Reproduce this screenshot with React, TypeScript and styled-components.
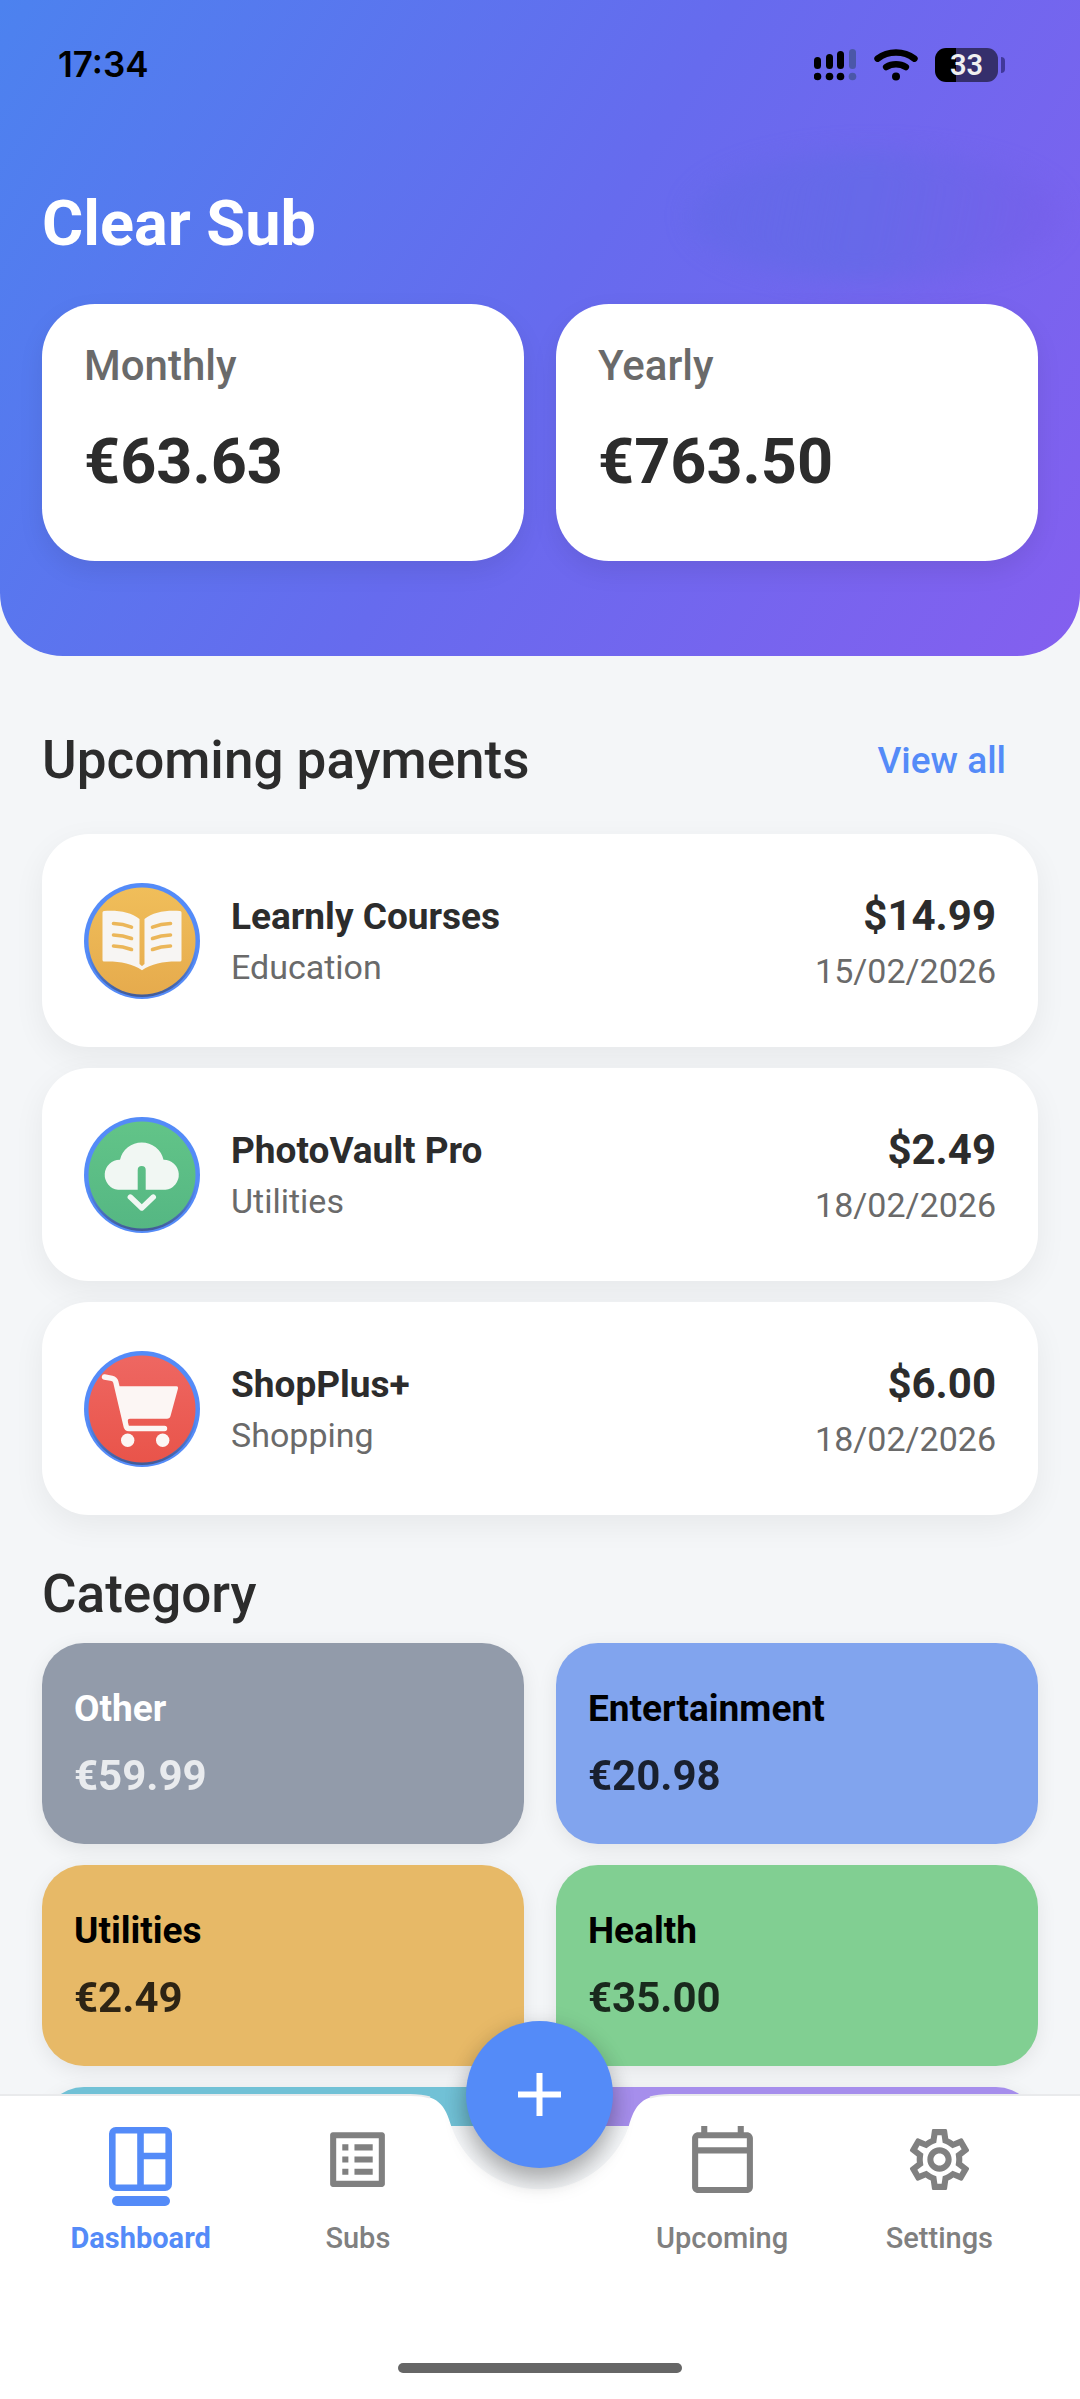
import React from "react";
import styled, { createGlobalStyle } from "styled-components";
import {
  MdOutlineCalendarToday,
  MdOutlineListAlt,
  MdOutlineSettings,
} from "react-icons/md";

const BLUE = "#548bf8";
const INK = "#2c2c2c";
const MUTED = "#6a6a6a";

const GlobalStyle = createGlobalStyle`
  *, *::before, *::after { box-sizing: border-box; }
  body {
    margin: 0;
    background: #f4f6f8;
    color: ${INK};
    font-family: Roboto, "Noto Sans", sans-serif;
  }
  h1, h2, h3, p, ul { margin: 0; padding: 0; }
  button { font: inherit; border: 0; padding: 0; background: none; cursor: pointer; }
`;

const Screen = styled.div`
  display: flex;
  flex-direction: column;
  height: 100vh;
  overflow: hidden;
`;

const Scroller = styled.div`
  flex: 1;
  min-height: 0;
  overflow: hidden;
`;

const Header = styled.header`
  position: relative;
  padding: 0 42px 95px;
  border-radius: 0 0 63px 63px;
  background: linear-gradient(121deg, #4c82ef 0%, #666bee 50%, #845fef 100%);
`;

const Smudge = styled.div`
  position: absolute;
  top: 152px;
  right: 20px;
  width: 370px;
  height: 128px;
  border-radius: 50%;
  background: linear-gradient(100deg, rgba(94, 104, 228, 0.4), rgba(98, 106, 230, 0.7) 45%, rgba(120, 92, 232, 0.5));
  filter: blur(12px);
`;

const StatusBar = styled.div`
  display: flex;
  align-items: center;
  justify-content: space-between;
  height: 128px;
  padding: 0 33px 0 16px;
`;

const Clock = styled.time`
  font: 600 35px/44px Inter, sans-serif;
  color: #000;
`;

const StatusIcons = styled.div`
  display: flex;
  align-items: center;
  gap: 17px;
  padding-top: 2px;
`;

const Battery = styled.div`
  display: flex;
  align-items: center;
  gap: 3px;
`;

const BatteryBody = styled.div`
  width: 63px;
  height: 34px;
  border-radius: 11px;
  background: linear-gradient(90deg, #000 34%, #352f6c 34%);
  color: #f0f0f0;
  font: 600 29px/34px Roboto, sans-serif;
  text-align: center;
`;

const BatteryTip = styled.div`
  width: 4px;
  height: 16px;
  border-radius: 0 4px 4px 0;
  background: #40389a;
`;

const AppTitle = styled.h1`
  position: relative;
  padding-top: 59px;
  color: #fff;
  font-size: 63px;
  font-weight: 700;
  line-height: 74px;
`;

const SummaryGrid = styled.div`
  position: relative;
  display: grid;
  grid-template-columns: 1fr 1fr;
  gap: 32px;
  margin-top: 43px;
`;

const SummaryCard = styled.section`
  display: grid;
  gap: 29px;
  padding: 32px 42px 62px;
  border-radius: 53px;
  background: #fff;
  box-shadow: 0 10px 26px rgba(0, 0, 0, 0.08);
`;

const SummaryLabel = styled.h2`
  color: ${MUTED};
  font-size: 42px;
  font-weight: 500;
  line-height: 60px;
`;

const SummaryValue = styled.p`
  font-size: 63px;
  font-weight: 700;
  line-height: 74px;
`;

const Main = styled.main`
  padding: 73px 42px 0;
`;

const SectionHead = styled.div`
  display: flex;
  align-items: center;
  justify-content: space-between;
`;

const SectionTitle = styled.h2`
  font-size: 53px;
  font-weight: 500;
  line-height: 62px;
`;

const ViewAll = styled.button`
  padding: 2px 32px 0;
  color: ${BLUE};
  font-size: 37px;
  font-weight: 500;
  line-height: 60px;
`;

const PaymentList = styled.ul`
  display: grid;
  gap: 21px;
  margin: 43px 0 48px;
  list-style: none;
`;

const PaymentCard = styled.li`
  display: flex;
  align-items: center;
  gap: 31px;
  padding: 49px 42px 48px;
  border-radius: 47px;
  background: #fff;
  box-shadow: 0 10px 32px rgba(0, 0, 0, 0.06);
`;

const Avatar = styled.svg`
  display: block;
  flex: none;
  width: 116px;
  height: 116px;
`;

const PaymentInfo = styled.div`
  display: grid;
  gap: 7px;
  flex: 1;
`;

const PaymentSum = styled.div`
  display: grid;
  gap: 9px;
  text-align: right;
`;

const PaymentName = styled.h3`
  font-size: 37px;
  font-weight: 700;
  line-height: 44px;
`;

const PaymentAmount = styled.p`
  font-size: 42px;
  font-weight: 700;
  line-height: 50px;
`;

const Meta = styled.p`
  color: ${MUTED};
  font-size: 34px;
  line-height: 42px;
`;

const CategoryGrid = styled.div`
  display: grid;
  grid-template-columns: 1fr 1fr;
  gap: 21px 32px;
  margin-top: 18px;
`;

const CategoryCard = styled.section<{ $fill: string; $ink: string }>`
  display: grid;
  gap: 20px;
  padding: 44px 32px 43px;
  border-radius: 42px;
  background: ${(p) => p.$fill};
  color: ${(p) => p.$ink};
  box-shadow: 0 5px 20px rgba(0, 0, 0, 0.08);
`;

const CategoryName = styled.h3`
  font-size: 37px;
  font-weight: 700;
  line-height: 44px;
`;

const CategoryAmount = styled.p`
  font-size: 42px;
  font-weight: 700;
  line-height: 50px;
  opacity: 0.8;
`;

const Nav = styled.nav`
  position: relative;
  margin-top: -32px;
  padding: 29px 32px 26px;
`;

const NavSurface = styled.div`
  position: absolute;
  inset: 0;
  display: flex;
`;

const NavSide = styled.div`
  flex: 1;
  border-top: 2px solid #e9eaec;
  background: #fff;
`;

const NavCenter = styled.div`
  display: flex;
  flex-direction: column;
  width: 268px;

  &::after {
    content: "";
    flex: 1;
    background: #fff;
  }
`;

const NavItems = styled.div`
  position: relative;
  display: grid;
  grid-template-columns: 1fr 1fr 147px 1fr 1fr;
`;

const NavItem = styled.button<{ $active?: boolean }>`
  display: flex;
  flex-direction: column;
  align-items: center;
  color: ${(p) => (p.$active ? BLUE : "#808080")};
  font-size: 29px;
  font-weight: ${(p) => (p.$active ? 700 : 500)};
  line-height: 34px;

  svg {
    display: block;
    width: 73px;
    height: 73px;
  }

  &::after {
    content: "";
    order: 1;
    width: 58px;
    height: 10px;
    margin-bottom: 15px;
    border-radius: 5px;
    background: ${(p) => (p.$active ? BLUE : "transparent")};
  }

  span {
    order: 2;
  }
`;

const Fab = styled.button`
  position: absolute;
  top: -73px;
  left: 50%;
  display: grid;
  place-items: center;
  width: 147px;
  height: 147px;
  margin-left: -74px;
  border-radius: 50%;
  background: ${BLUE};
  box-shadow: 0 14px 22px rgba(0, 0, 0, 0.22), 0 5px 24px rgba(0, 0, 0, 0.14);
`;

const HomeIndicator = styled.div`
  position: relative;
  width: 284px;
  height: 10px;
  margin: 108px auto 0;
  border-radius: 5px;
  background: #666;
`;

const Signal = () => (
  <svg width="43" height="32" viewBox="0 0 43 32" aria-hidden="true">
    {[
      { x: 0, y: 8 },
      { x: 12, y: 5 },
      { x: 23, y: 2 },
      { x: 35, y: 0 },
    ].map((b, i) => (
      <g key={b.x} fill={i === 3 ? "#4b57a8" : "#000"}>
        <rect x={b.x} y={b.y} width="7" height={20 - b.y} rx="3.5" />
        <circle cx={b.x + 3.5} cy="27.5" r="3.8" />
      </g>
    ))}
  </svg>
);

const Wifi = () => (
  <svg width="44" height="32" viewBox="0 0 44 32" fill="none" stroke="#000" strokeLinecap="round" aria-hidden="true">
    <path d="M3.6 9.6C14 1.4 30 1.4 40.4 9.6" strokeWidth="6.6" />
    <path d="M12.2 18C18 14.4 26 14.4 31.8 18" strokeWidth="6.6" />
    <circle cx="22" cy="27.5" r="4" fill="#000" stroke="none" />
  </svg>
);

type LogoKind = "book" | "cloud" | "cart";

const logoFill: Record<LogoKind, [string, string]> = {
  book: ["#f0be5a", "#e6ab4d"],
  cloud: ["#62c488", "#55b783"],
  cart: ["#ee6762", "#e9544a"],
};

const glyphs: Record<LogoKind, React.ReactNode> = {
  book: (
    <>
      <path
        d="M20 28C34 27 47 29 55.5 36V81C57 82 57.5 83 58 83C58.5 83 59 82 60.5 81V36C69 29 82 27 96 28Q97.5 28 97.5 29.5V77Q97.5 78.5 96 78.5C82 78 68 80 58 87.3C48 80 34 78 20 78.5Q18.5 78.5 18.5 77V29.5Q18.5 28 20 28Z"
        fill="#f7f5f3"
      />
      <g fill="none" stroke="#ebb659" strokeWidth="3.6" strokeLinecap="round">
        <path d="M29.5 40.5Q39 40.8 47.5 44.2M29.5 52Q39 52.3 47.5 55.5M29.5 63Q39 63.3 47.5 66.5" />
        <path d="M86.5 40.5Q77 40.8 68.5 44.2M86.5 52Q77 52.3 68.5 55.5M86.5 63Q77 63.3 68.5 66.5" />
      </g>
    </>
  ),
  cloud: (
    <>
      <path
        d="M34 72.7A15 15 0 0 1 36 42.8A22.3 22.3 0 0 1 79.5 42.8A15 15 0 0 1 81.5 72.7H61.7V53A4 4 0 0 0 53.7 53V72.7Z"
        fill="#f1f7f3"
      />
      <path d="M46.3 80L57.8 91L69.3 80" fill="none" stroke="#f1f7f3" strokeWidth="5.4" strokeLinecap="round" strokeLinejoin="round" />
    </>
  ),
  cart: (
    <g fill="#fcf6f4">
      <path d="M20.5 26L28 27.3Q31 28 31.8 31L42 74.5Q42.5 77.5 45 77.5H80.5" fill="none" stroke="#fcf6f4" strokeWidth="5.4" strokeLinecap="round" strokeLinejoin="round" />
      <path d="M33 35.3H92.5Q94.5 35.3 94 37.5L86.5 65Q85.8 67.8 83 67.8H46Q43.5 67.8 43.5 71L42 76Z" />
      <circle cx="43.7" cy="89.3" r="6.7" />
      <circle cx="78.7" cy="89.3" r="6.7" />
    </g>
  ),
};

const Logo = ({ kind }: { kind: LogoKind }) => (
  <Avatar viewBox="0 0 116 116" aria-hidden="true">
    <defs>
      <linearGradient id={kind + "-fill"} x1="0" y1="0" x2="0" y2="1">
        <stop offset="0" stopColor={logoFill[kind][0]} />
        <stop offset="1" stopColor={logoFill[kind][1]} />
      </linearGradient>
      <linearGradient id={kind + "-rim"} x1="0" y1="0" x2="0" y2="1">
        <stop offset="0.55" stopColor="#3f5f9e" stopOpacity="0" />
        <stop offset="1" stopColor="#3f5488" stopOpacity="0.9" />
      </linearGradient>
    </defs>
    <circle cx="58" cy="58" r="58" fill={BLUE} />
    <circle cx="58" cy="58.5" r="55.5" fill={`url(#${kind}-rim)`} />
    <circle cx="58" cy="58" r="53.5" fill={`url(#${kind}-fill)`} />
    {glyphs[kind]}
  </Avatar>
);

const DashboardIcon = () => (
  <svg viewBox="0 0 73 73" fill="none" stroke="currentColor" strokeWidth="6.6" aria-hidden="true">
    <rect x="8.3" y="7.3" width="56.4" height="57.4" rx="3.5" />
    <path d="M36.5 7V65M36.5 33H65" />
  </svg>
);

const NotchShape = () => (
  <svg width="268" height="110" viewBox="0 0 268 110" aria-hidden="true">
    <path
      d="M0 1H4C32 1 39 10 45.5 33A94 94 0 0 0 222.5 33C229 10 236 1 264 1H268V110H0Z"
      fill="#fff"
    />
    <path d="M0 1H4Q16 1 24 3.5M244 3.5Q252 1 264 1H268" fill="none" stroke="#e9eaec" strokeWidth="2" />
  </svg>
);

const payments: { name: string; category: string; amount: string; date: string; logo: LogoKind }[] = [
  { name: "Learnly Courses", category: "Education", amount: "$14.99", date: "15/02/2026", logo: "book" },
  { name: "PhotoVault Pro", category: "Utilities", amount: "$2.49", date: "18/02/2026", logo: "cloud" },
  { name: "ShopPlus+", category: "Shopping", amount: "$6.00", date: "18/02/2026", logo: "cart" },
];

const categories = [
  { name: "Other", amount: "€59.99", fill: "#929baa", ink: "#fff" },
  { name: "Entertainment", amount: "€20.98", fill: "#81a4ee", ink: "#000" },
  { name: "Utilities", amount: "€2.49", fill: "#e7b967", ink: "#000" },
  { name: "Health", amount: "€35.00", fill: "#81cf92", ink: "#000" },
];

const hiddenCategories = ["#71c1d6", "#a68eec"];

export default function App() {
  return (
    <>
      <GlobalStyle />
      <Screen>
        <Scroller>
          <Header>
            <Smudge />
            <StatusBar>
              <Clock>17:34</Clock>
              <StatusIcons>
                <Signal />
                <Wifi />
                <Battery>
                  <BatteryBody>33</BatteryBody>
                  <BatteryTip />
                </Battery>
              </StatusIcons>
            </StatusBar>
            <AppTitle>Clear Sub</AppTitle>
            <SummaryGrid>
              <SummaryCard>
                <SummaryLabel>Monthly</SummaryLabel>
                <SummaryValue>€63.63</SummaryValue>
              </SummaryCard>
              <SummaryCard>
                <SummaryLabel>Yearly</SummaryLabel>
                <SummaryValue>€763.50</SummaryValue>
              </SummaryCard>
            </SummaryGrid>
          </Header>
          <Main>
            <SectionHead>
              <SectionTitle>Upcoming payments</SectionTitle>
              <ViewAll type="button">View all</ViewAll>
            </SectionHead>
            <PaymentList>
              {payments.map((p) => (
                <PaymentCard key={p.name}>
                  <Logo kind={p.logo} />
                  <PaymentInfo>
                    <PaymentName>{p.name}</PaymentName>
                    <Meta>{p.category}</Meta>
                  </PaymentInfo>
                  <PaymentSum>
                    <PaymentAmount>{p.amount}</PaymentAmount>
                    <Meta>{p.date}</Meta>
                  </PaymentSum>
                </PaymentCard>
              ))}
            </PaymentList>
            <SectionTitle>Category</SectionTitle>
            <CategoryGrid>
              {categories.map((c) => (
                <CategoryCard key={c.name} $fill={c.fill} $ink={c.ink}>
                  <CategoryName>{c.name}</CategoryName>
                  <CategoryAmount>{c.amount}</CategoryAmount>
                </CategoryCard>
              ))}
              {hiddenCategories.map((fill) => (
                <CategoryCard key={fill} $fill={fill} $ink="#000" />
              ))}
            </CategoryGrid>
          </Main>
        </Scroller>
        <Nav>
          <NavSurface>
            <NavSide />
            <NavCenter>
              <NotchShape />
            </NavCenter>
            <NavSide />
          </NavSurface>
          <NavItems>
            <NavItem type="button" $active aria-current="page">
              <DashboardIcon />
              <span>Dashboard</span>
            </NavItem>
            <NavItem type="button">
              <MdOutlineListAlt />
              <span>Subs</span>
            </NavItem>
            <div />
            <NavItem type="button">
              <MdOutlineCalendarToday />
              <span>Upcoming</span>
            </NavItem>
            <NavItem type="button">
              <MdOutlineSettings />
              <span>Settings</span>
            </NavItem>
          </NavItems>
          <HomeIndicator />
          <Fab type="button" aria-label="Add subscription">
            <svg width="43" height="43" viewBox="0 0 43 43" stroke="#fff" strokeWidth="6" aria-hidden="true">
              <path d="M21.5 0V43M0 21.5H43" />
            </svg>
          </Fab>
        </Nav>
      </Screen>
    </>
  );
}
